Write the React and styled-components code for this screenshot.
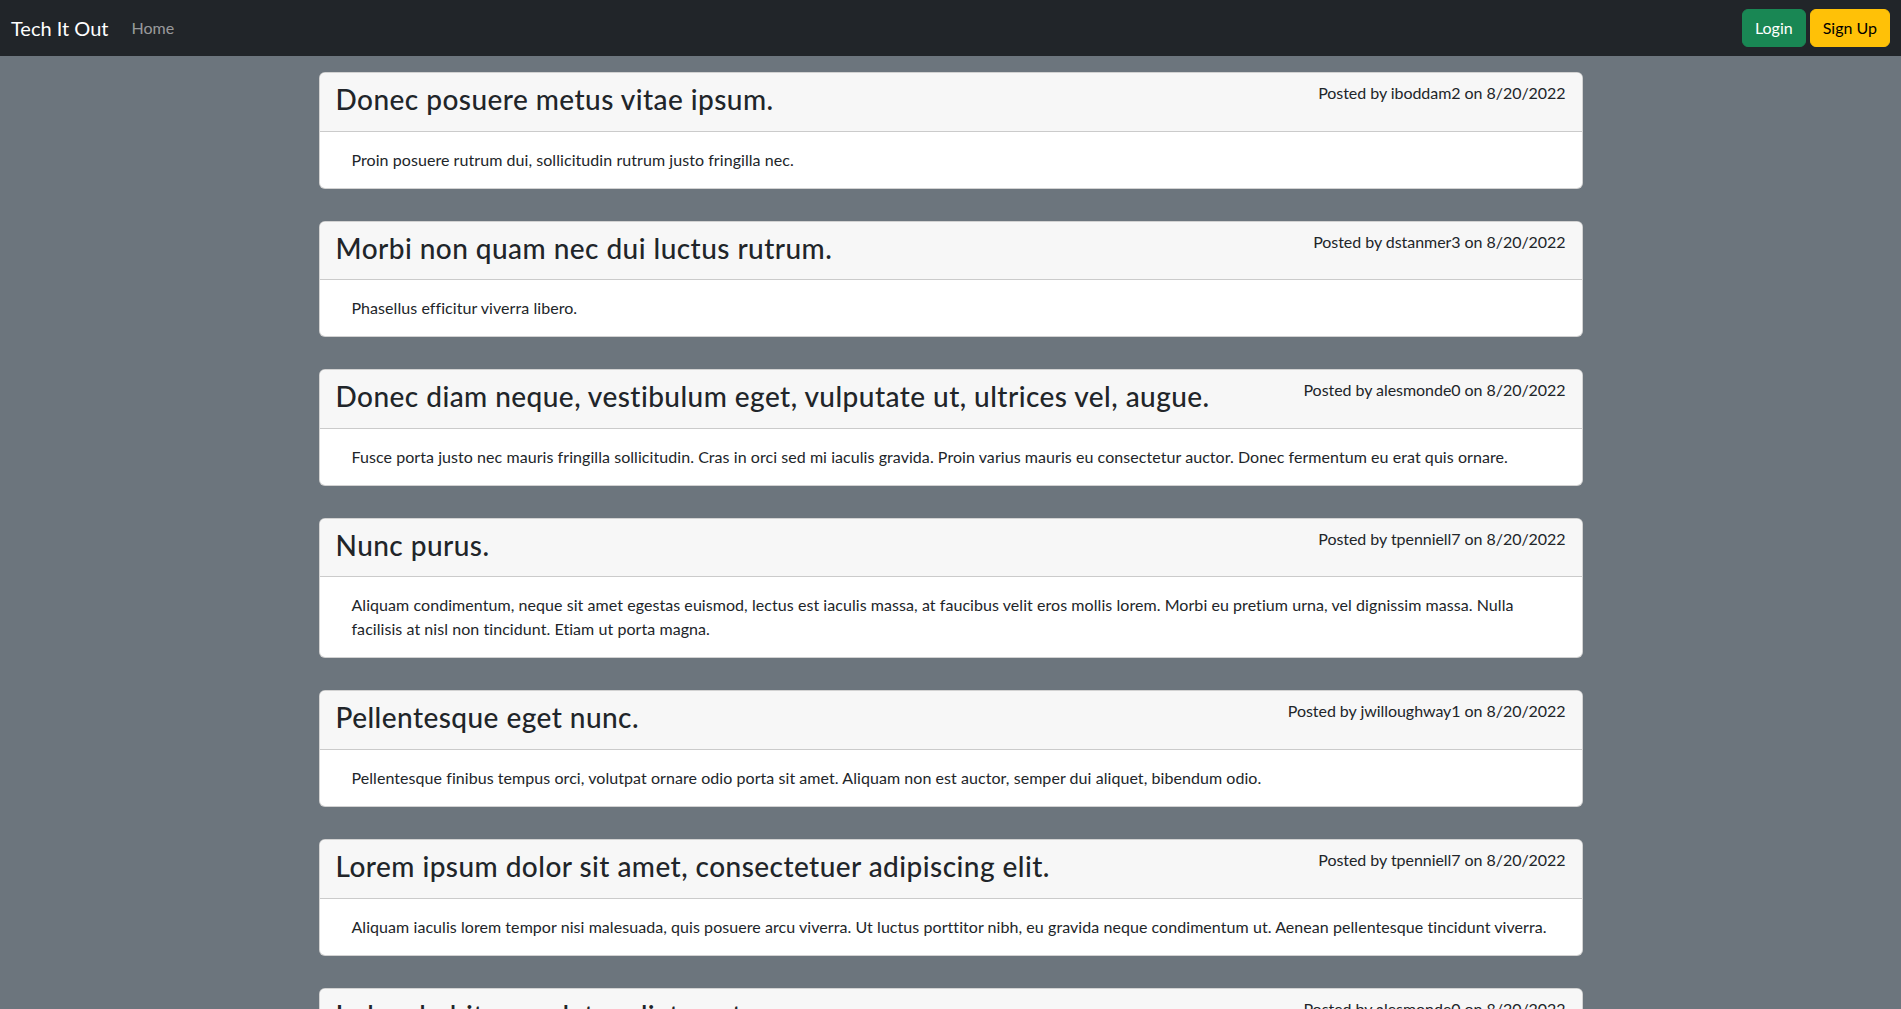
import React from 'react';
import styled, { createGlobalStyle } from 'styled-components';

const GlobalStyle = createGlobalStyle`
  * {
    box-sizing: border-box;
  }
  body {
    margin: 0;
    background: #6c757d;
    color: #212529;
    font-family: 'Segoe UI', Lato, 'Liberation Sans', sans-serif;
    font-size: 16px;
    line-height: 1.5;
  }
`;

const Navbar = styled.nav`
  height: 56px;
  background: #212529;
  display: flex;
  align-items: center;
  justify-content: space-between;
  padding: 0 11px;
`;

const NavLeft = styled.div`
  display: flex;
  align-items: center;
`;

const Brand = styled.a`
  color: #fff;
  font-size: 20px;
  text-decoration: none;
  margin-right: 23px;
  padding: 5px 0;
`;

const NavLink = styled.a`
  color: rgba(255, 255, 255, 0.55);
  text-decoration: none;
  padding: 8px 0;
`;

const NavRight = styled.div`
  display: flex;
  gap: 4px;
`;

const Button = styled.button`
  font-family: inherit;
  font-size: 16px;
  line-height: 1.5;
  height: 38px;
  padding: 6px 12px;
  border-radius: 6px;
  border: 1px solid ${(p) => p.$bg};
  background: ${(p) => p.$bg};
  color: ${(p) => p.$color};
  cursor: pointer;
`;

const Feed = styled.main`
  width: 1264px;
  margin: 0 auto;
  padding: 16px 0 32px;
  display: flex;
  flex-direction: column;
  gap: 32px;
`;

const Card = styled.article`
  background: #fff;
  border: 1px solid rgba(0, 0, 0, 0.175);
  border-radius: 6px;
  overflow: hidden;
`;

const CardHeader = styled.header`
  background: #f7f7f7;
  padding: 8px 16px;
  border-bottom: 1px solid rgba(0, 0, 0, 0.175);
  display: flex;
  justify-content: space-between;
  align-items: flex-start;
`;

const Title = styled.h3`
  margin: 2px 0 6px;
  font-size: 28px;
  font-weight: 500;
  line-height: 1.2;
  letter-spacing: 0.45px;
`;

const Meta = styled.span`
  flex-shrink: 0;
  margin-left: 16px;
  letter-spacing: -0.05px;
`;

const CardBody = styled.div`
  padding: 16px;
`;

const Text = styled.p`
  margin: 0;
  padding: 0 16px;
  letter-spacing: 0.06px;
`;

const posts = [
  {
    title: 'Donec posuere metus vitae ipsum.',
    user: 'iboddam2',
    body: 'Proin posuere rutrum dui, sollicitudin rutrum justo fringilla nec.',
  },
  {
    title: 'Morbi non quam nec dui luctus rutrum.',
    user: 'dstanmer3',
    body: 'Phasellus efficitur viverra libero.',
  },
  {
    title: 'Donec diam neque, vestibulum eget, vulputate ut, ultrices vel, augue.',
    user: 'alesmonde0',
    body: 'Fusce porta justo nec mauris fringilla sollicitudin. Cras in orci sed mi iaculis gravida. Proin varius mauris eu consectetur auctor. Donec fermentum eu erat quis ornare.',
  },
  {
    title: 'Nunc purus.',
    user: 'tpenniell7',
    body: 'Aliquam condimentum, neque sit amet egestas euismod, lectus est iaculis massa, at faucibus velit eros mollis lorem. Morbi eu pretium urna, vel dignissim massa. Nulla facilisis at nisl non tincidunt. Etiam ut porta magna.',
  },
  {
    title: 'Pellentesque eget nunc.',
    user: 'jwilloughway1',
    body: 'Pellentesque finibus tempus orci, volutpat ornare odio porta sit amet. Aliquam non est auctor, semper dui aliquet, bibendum odio.',
  },
  {
    title: 'Lorem ipsum dolor sit amet, consectetuer adipiscing elit.',
    user: 'tpenniell7',
    body: 'Aliquam iaculis lorem tempor nisi malesuada, quis posuere arcu viverra. Ut luctus porttitor nibh, eu gravida neque condimentum ut. Aenean pellentesque tincidunt viverra.',
  },
  {
    title: 'In hac habitasse platea dictumst.',
    user: 'alesmonde0',
    body: 'Vestibulum ante ipsum primis in faucibus orci luctus et ultrices posuere cubilia curae.',
  },
];

const App = () => {
  return (
    <>
      <GlobalStyle />
      <Navbar>
        <NavLeft>
          <Brand href="#">Tech It Out</Brand>
          <NavLink href="#">Home</NavLink>
        </NavLeft>
        <NavRight>
          <Button $bg="#198754" $color="#fff">Login</Button>
          <Button $bg="#ffc107" $color="#000">Sign Up</Button>
        </NavRight>
      </Navbar>
      <Feed>
        {posts.map((post, index) => (
          <Card key={index}>
            <CardHeader>
              <Title>{post.title}</Title>
              <Meta>Posted by {post.user} on 8/20/2022</Meta>
            </CardHeader>
            <CardBody>
              <Text>{post.body}</Text>
            </CardBody>
          </Card>
        ))}
      </Feed>
    </>
  );
};

export default App;
